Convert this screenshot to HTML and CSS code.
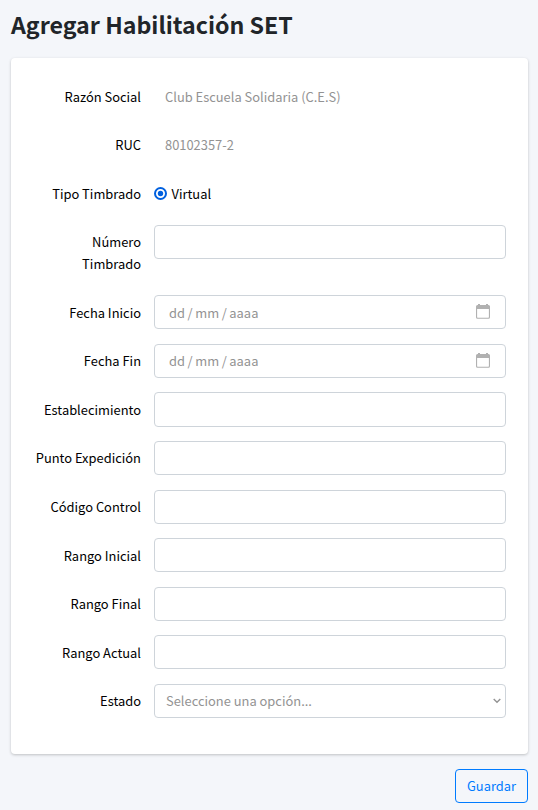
FILE: index.html
```html
<!DOCTYPE html>
<html lang="es">
<head>
<meta charset="utf-8">
<title>Agregar Habilitación SET</title>
<link rel="stylesheet" href="styles.css">
</head>
<body>
<h1 class="title">Agregar Habilitación SET</h1>
<form class="form">
  <div class="card">
    <div class="row"><span class="label">Razón Social</span><div class="plain">Club Escuela Solidaria (C.E.S)</div></div>
    <div class="row"><span class="label">RUC</span><div class="plain">80102357-2</div></div>
    <div class="row"><span class="label">Tipo Timbrado</span>
      <label class="choice"><svg class="radio" viewBox="0 0 13 13"><circle cx="6.5" cy="6.5" r="5.5" fill="#fff" stroke="#0060df" stroke-width="2"/><circle cx="6.5" cy="6.5" r="2.7" fill="#0060df"/></svg>Virtual</label></div>
    <div class="row row-tall"><label class="label" for="numero">Número Timbrado</label><input class="control" id="numero"></div>
    <div class="row"><span class="label">Fecha Inicio</span>
      <div class="control date"><span>dd</span><span>/</span><span>mm</span><span>/</span><span>aaaa</span><svg class="calendar" viewBox="0 0 14 15"><path d="M2 0h2v1h6V0h2v1h.5A1.5 1.5 0 0 1 14 2.5v10.8a1.5 1.5 0 0 1-1.5 1.5h-11A1.5 1.5 0 0 1 0 13.3V2.5A1.5 1.5 0 0 1 1.5 1H2zM1.1 5v8q0 .7.6.7h10.6q.6 0 .6-.7V5z" fill="#b1b1b1" fill-rule="evenodd"/></svg></div></div>
    <div class="row"><span class="label">Fecha Fin</span>
      <div class="control date"><span>dd</span><span>/</span><span>mm</span><span>/</span><span>aaaa</span><svg class="calendar" viewBox="0 0 14 15"><path d="M2 0h2v1h6V0h2v1h.5A1.5 1.5 0 0 1 14 2.5v10.8a1.5 1.5 0 0 1-1.5 1.5h-11A1.5 1.5 0 0 1 0 13.3V2.5A1.5 1.5 0 0 1 1.5 1H2zM1.1 5v8q0 .7.6.7h10.6q.6 0 .6-.7V5z" fill="#b1b1b1" fill-rule="evenodd"/></svg></div></div>
    <div class="row"><label class="label" for="establecimiento">Establecimiento</label><input class="control" id="establecimiento"></div>
    <div class="row"><label class="label" for="punto">Punto Expedición</label><input class="control" id="punto"></div>
    <div class="row"><label class="label" for="codigo">Código Control</label><input class="control" id="codigo"></div>
    <div class="row"><label class="label" for="inicial">Rango Inicial</label><input class="control" id="inicial"></div>
    <div class="row"><label class="label" for="final">Rango Final</label><input class="control" id="final"></div>
    <div class="row"><label class="label" for="actual">Rango Actual</label><input class="control" id="actual"></div>
    <div class="row"><span class="label">Estado</span>
      <div class="control select"><span>Seleccione una opción...</span><svg class="chevron" viewBox="0 0 8 6"><path d="M.7 1 4 4.3 7.3 1" fill="none" stroke="#939393" stroke-width="1.4"/></svg></div></div>
  </div>
  <div class="actions"><button class="save" type="button">Guardar</button></div>
</form>
</body>
</html>
```
FILE: styles.css
```css
* { box-sizing: border-box; }

body {
  margin: 0;
  padding: 7px 10px 0 11px;
  background: #f4f6fa;
  color: #000;
  font: 12.9px/21.6px "Noto Sans CJK SC", sans-serif;
}

.title {
  margin: 0 0 15.8px;
  color: #212529;
  font-size: 23.2px;
  line-height: 35px;
  font-weight: 700;
}

.card {
  height: 696.2px;
  padding: 21.6px 22px 21.6px 21px;
  background: #fff;
  border-radius: 4px;
  box-shadow: 0 1px 3px rgba(0, 0, 0, .22);
}

.row {
  display: grid;
  grid-template-columns: 109px 352px;
  column-gap: 13px;
  align-items: start;
  margin-bottom: 14.4px;
}

.row-tall { margin-bottom: 15.1px; }

.label {
  padding: 6.5px 0 5.9px;
  text-align: right;
}

.plain {
  padding: 6.4px 11px 6px;
  color: #939393;
}

.choice {
  display: flex;
  align-items: center;
  gap: 4.5px;
  padding: 6.4px 0 6px;
}

.radio { width: 13px; height: 13px; }

.control {
  width: 100%;
  height: 34.2px;
  padding: 0 11px;
  border: 1px solid #ced4da;
  border-radius: 4px;
  background: #fff;
  color: #939393;
  font: inherit;
}

.date {
  display: flex;
  align-items: center;
  gap: 2.6px;
  padding: .7px 15px 0 14px;
}

.calendar {
  width: 14px;
  height: 15px;
  margin: -1.7px 0 0 auto;
}

.select {
  display: flex;
  align-items: center;
  justify-content: space-between;
  padding-right: 4px;
}

.chevron { width: 8px; height: 6px; }

.actions {
  display: flex;
  justify-content: flex-end;
  margin-top: 15px;
}

.save {
  width: 73px;
  height: 34px;
  padding: 0;
  border: 1px solid #007bff;
  border-radius: 4px;
  background: transparent;
  color: #007bff;
  font: inherit;
}
```
